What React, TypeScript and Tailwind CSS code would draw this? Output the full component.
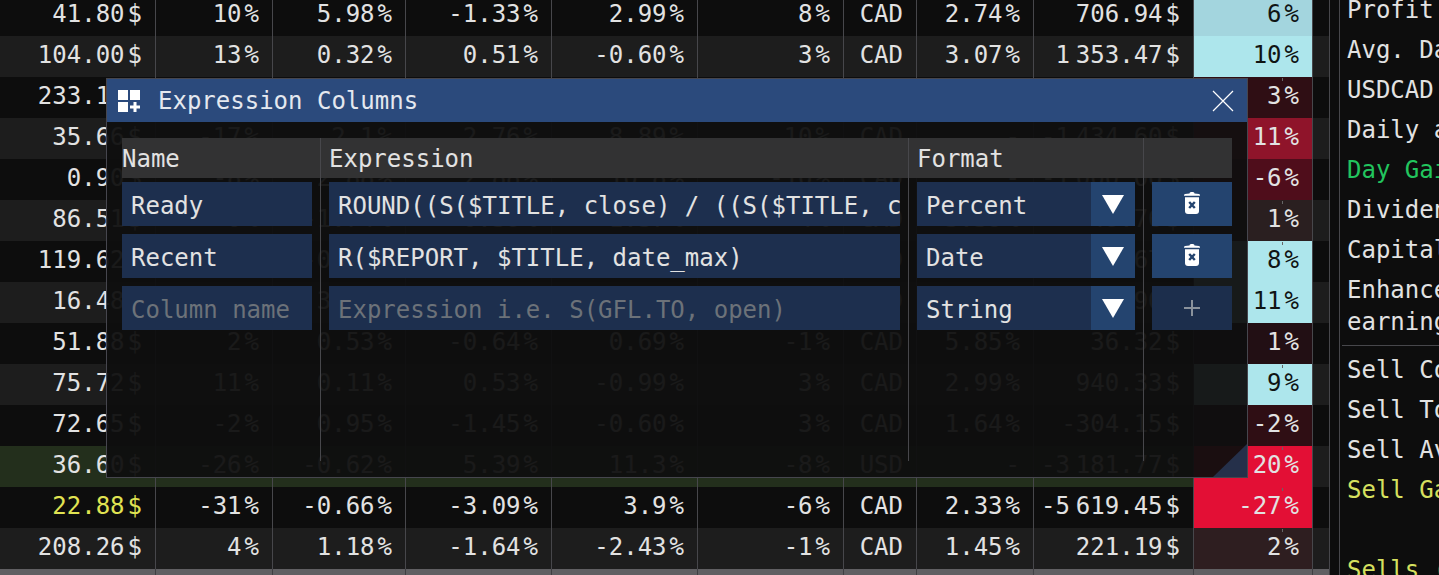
import React from 'react';

type Row = {
  cells: string[];
  heat: string;
  dark?: boolean;
  rowBg: string;
  priceClass?: string;
};

const alt = 'bg-[#1d1d1d]';
const base = 'bg-[#0d0d0d]';

const rows: Row[] = [
  { cells: ['41.80$', '10%', '5.98%', '-1.33%', '2.99%', '8%', 'CAD', '2.74%', '706.94$', '6%'], heat: 'bg-[#a3d5de]', dark: true, rowBg: base },
  { cells: ['104.00$', '13%', '0.32%', '0.51%', '-0.60%', '3%', 'CAD', '3.07%', '1 353.47$', '10%'], heat: 'bg-[#ade6ec]', dark: true, rowBg: alt },
  { cells: ['233.18$', '5%', '0.41%', '0.22%', '1.05%', '2%', 'CAD', '1.90%', '412.08$', '3%'], heat: 'bg-[#2f0e14]', rowBg: base },
  { cells: ['35.66$', '-17%', '2.1%', '2.76%', '8.89%', '10%', 'CAD', '-', '-1 434.60$', '11%'], heat: 'bg-[#8f142a]', rowBg: alt },
  { cells: ['0.90$', '-8%', '2.88%', '2.88%', '10.8%', '-10%', 'CAD', '-', '-1 000.00$', '-6%'], heat: 'bg-[#4f0d1b]', rowBg: base },
  { cells: ['86.51$', '0%', '-1.74%', '-0.38%', '1.37%', '4%', 'CAD', '3.59%', '48.76$', '1%'], heat: 'bg-[#2a1f20]', rowBg: alt },
  { cells: ['119.62$', '9%', '-0.95%', '0.34%', '0.21%', '4%', 'CAD', '3.34%', '852.67$', '8%'], heat: 'bg-[#ade6ec]', dark: true, rowBg: base },
  { cells: ['16.48$', '8%', '3.95%', '1.31%', '18.2%', '17%', 'CAD', '-', '1 657.90$', '11%'], heat: 'bg-[#ade6ec]', dark: true, rowBg: alt },
  { cells: ['51.88$', '2%', '0.53%', '-0.64%', '0.69%', '-1%', 'CAD', '5.85%', '36.32$', '1%'], heat: 'bg-[#220f14]', rowBg: base },
  { cells: ['75.72$', '11%', '0.11%', '0.53%', '-0.99%', '3%', 'CAD', '2.99%', '940.33$', '9%'], heat: 'bg-[#ade6ec]', dark: true, rowBg: alt },
  { cells: ['72.65$', '-2%', '0.95%', '-1.45%', '-0.60%', '3%', 'CAD', '1.64%', '-304.15$', '-2%'], heat: 'bg-[#2f0e14]', rowBg: base },
  { cells: ['36.60$', '-26%', '-0.62%', '5.39%', '11.3%', '-8%', 'USD', '-', '-3 181.77$', '20%'], heat: 'bg-[#e30f35]', rowBg: 'bg-[#232f1c]' },
  { cells: ['22.88$', '-31%', '-0.66%', '-3.09%', '3.9%', '-6%', 'CAD', '2.33%', '-5 619.45$', '-27%'], heat: 'bg-[#e30f35]', rowBg: base, priceClass: 'text-[#e0e352]' },
  { cells: ['208.26$', '4%', '1.18%', '-1.64%', '-2.43%', '-1%', 'CAD', '1.45%', '221.19$', '2%'], heat: 'bg-[#2e1e20]', rowBg: alt },
];

const gridCols = 'grid grid-cols-[156px_117px_133px_146px_146px_146px_73px_117px_160px_119px_17px]';
const cellClass = 'relative flex items-center justify-end pr-[13px] pb-[3px] border-r border-[#47474b]';
const tickRows = [2, 5, 6, 9, 11, 12, 13];

// splits "1 353.47$" so the thin thousands gap and the unit gap can be spaced
const Value = ({ text }: { text: string }) => {
  const unit = /[$%]$/.test(text) ? text.slice(-1) : '';
  const body = unit ? text.slice(0, -1) : text;
  const parts = body.split(' ');
  return (
    <span className="whitespace-nowrap">
      {parts[0]}
      {parts[1] && <span className="ml-[6px]">{parts[1]}</span>}
      {unit && <span className="ml-[3px]">{unit}</span>}
    </span>
  );
};

const TableRow = ({ row, index }: { row: Row; index: number }) => (
  <div className={`${gridCols} h-[41px] ${row.rowBg}`}>
    {row.cells.map((c, i) => (
      <div
        key={i}
        className={`${cellClass} ${i === 9 ? row.heat : ''} ${i === 9 && row.dark ? 'text-[#101414]' : ''} ${i === 0 ? row.priceClass ?? '' : ''}`}
      >
        <Value text={c} />
        {i === 9 && tickRows.includes(index) && (
          <div className="absolute top-[1px] left-[88px] w-px h-[3px] bg-[#666666]" />
        )}
      </div>
    ))}
    <div className={`border-r border-[#47474b] ${index % 2 ? alt : base}`} />
  </div>
);

const sideItems = [
  { t: 'Profit' },
  { t: 'Avg. Daily' },
  { t: 'USDCAD' },
  { t: 'Daily avg' },
  { t: 'Day Gain', c: 'text-[#22c55e]' },
  { t: 'Dividends' },
  { t: 'Capital' },
];

const sellItems = [
  { t: 'Sell Count' },
  { t: 'Sell Total' },
  { t: 'Sell Avg' },
  { t: 'Sell Gain', c: 'text-[#d6e05f]' },
  { t: '' },
  { t: 'Sells (', c: 'text-[#d6e05f]' },
];

const SideRow = ({ t, c }: { t: string; c?: string }) => (
  <div className={`h-10 flex items-center whitespace-nowrap ${c ?? ''}`}>{t}</div>
);

const Field = ({ children, muted }: { children: React.ReactNode; muted?: boolean }) => (
  <div
    className={`h-11 bg-[#1d2f4e] pl-[9px] pt-[3px] flex items-center whitespace-nowrap overflow-hidden ${muted ? 'text-[#6c7279]' : ''}`}
  >
    {children}
  </div>
);

const Combo = ({ value }: { value: string }) => (
  <div className="h-11 bg-[#1d2f4e] flex items-center justify-between pl-[9px]">
    <span className="pt-[3px]">{value}</span>
    <div className="w-11 h-11 bg-[#24446f] flex items-center justify-center">
      <svg width="22" height="19" viewBox="0 0 22 19">
        <polygon points="0,0 22,0 11,19" fill="#fff" />
      </svg>
    </div>
  </div>
);

const TrashButton = () => (
  <div className="h-11 bg-[#24446f] flex items-center justify-center pb-[3px]">
    <svg width="16" height="22" viewBox="0 0 16 22">
      <path d="M5.5 1.5 Q5.5 0 7 0 H9 Q10.5 0 10.5 1.5 L15 2 Q16 2.2 16 3.2 V3.8 H0 V3.2 Q0 2.2 1 2 Z" fill="#fff" />
      <path d="M1 5.2 H15 V19 Q15 22 12 22 H4 Q1 22 1 19 Z" fill="#fff" />
      <path d="M5.2 10 L10.8 16 M10.8 10 L5.2 16" stroke="#24446f" strokeWidth="2.4" />
    </svg>
  </div>
);

const ExpressionModal = () => (
  <div className="absolute left-[106px] top-[78px] w-[1142px] h-[400px] border border-[#46464e] bg-[rgba(15,15,15,0.95)] flex flex-col">
    <div className="h-[43px] shrink-0 bg-[#2b4a7c] flex items-center pl-[11px] pr-[13px]">
      <svg width="22" height="22" viewBox="0 0 22 22" fill="#fff">
        <rect x="0" y="0" width="10" height="10" />
        <rect x="12" y="0" width="10" height="10" />
        <rect x="0" y="12" width="10" height="10" />
        <path d="M15.5 12 H18.5 V15.5 H22 V18.5 H18.5 V22 H15.5 V18.5 H12 V15.5 H15.5 Z" />
      </svg>
      <span className="ml-[18px] text-[#e4e8ef]">Expression Columns</span>
      <svg className="ml-auto" width="22" height="22" viewBox="0 0 22 22">
        <path d="M1 1 L21 21 M21 1 L1 21" stroke="#fff" strokeWidth="1.2" />
      </svg>
    </div>
    <div className="flex pl-[15px] pt-4">
      <div className="w-[199px] h-[323px] border-r border-[#47474b] flex flex-col">
        <div className="h-10 bg-[#323233] flex items-center pt-[1px]">Name</div>
        <div className="flex flex-col gap-2 mt-1 pr-2">
          <Field>Ready</Field>
          <Field>Recent</Field>
          <Field muted>Column name</Field>
        </div>
      </div>
      <div className="w-[588px] h-[323px] border-r border-[#47474b] flex flex-col">
        <div className="h-10 bg-[#323233] flex items-center pl-2 pt-[1px]">Expression</div>
        <div className="flex flex-col gap-2 mt-1 px-2">
          <Field>ROUND((S($TITLE, close) / ((S($TITLE, close) + S($TITLE, open)) / 2) - 1) * 100)</Field>
          <Field>R($REPORT, $TITLE, date_max)</Field>
          <Field muted>Expression i.e. S(GFL.TO, open)</Field>
        </div>
      </div>
      <div className="w-[235px] h-[323px] border-r border-[#47474b] flex flex-col">
        <div className="h-10 bg-[#323233] flex items-center pl-2 pt-[1px]">Format</div>
        <div className="flex flex-col gap-2 mt-1 px-2">
          <Combo value="Percent" />
          <Combo value="Date" />
          <Combo value="String" />
        </div>
      </div>
      <div className="w-[88px] h-[323px] flex flex-col">
        <div className="h-10 bg-[#323233]" />
        <div className="flex flex-col gap-2 mt-1 pl-2">
          <TrashButton />
          <TrashButton />
          <div className="h-11 bg-[#1c2e4c] flex items-center justify-center">
            <svg width="16" height="16" viewBox="0 0 16 16">
              <path d="M8 0 V16 M0 8 H16" stroke="#8a929c" strokeWidth="2" />
            </svg>
          </div>
        </div>
      </div>
    </div>
    <svg className="absolute right-0 bottom-0" width="34" height="33" viewBox="0 0 34 33">
      <polygon points="34,0 34,33 0,33" fill="#25304a" />
    </svg>
  </div>
);

export default function App() {
  return (
    <div className="relative w-[1439px] h-[575px] overflow-hidden bg-[#0d0d0d] text-[#e2e2e2] text-[24px] leading-none font-['DejaVu_Sans_Mono',monospace] flex">
      <div className="w-[1330px] shrink-0 -mt-[5px]">
        {rows.map((r, i) => (
          <TableRow key={i} row={r} index={i} />
        ))}
        <div className={`${gridCols} h-3 bg-[#605f62]`}>
          {rows[0].cells.map((_, i) => (
            <div key={i} className="border-r border-[#3f3f42]" />
          ))}
          <div className="border-r border-[#3f3f42]" />
        </div>
      </div>
      <div className="ml-[9px] flex-1 min-w-0 border-l border-[#47474b] pl-[7px] -mt-[10px] overflow-hidden">
        {sideItems.map((s) => (
          <SideRow key={s.t} t={s.t} c={s.c} />
        ))}
        <div className="h-[72px] pt-1 leading-8 whitespace-nowrap">
          Enhanced
          <br />
          earnings
        </div>
        <div className="h-[8px] -ml-[5px] pt-[3px]">
          <div className="h-px bg-[#47474b]" />
        </div>
        {sellItems.map((s, i) => (
          <SideRow key={i} t={s.t} c={s.c} />
        ))}
      </div>
      <ExpressionModal />
    </div>
  );
}
